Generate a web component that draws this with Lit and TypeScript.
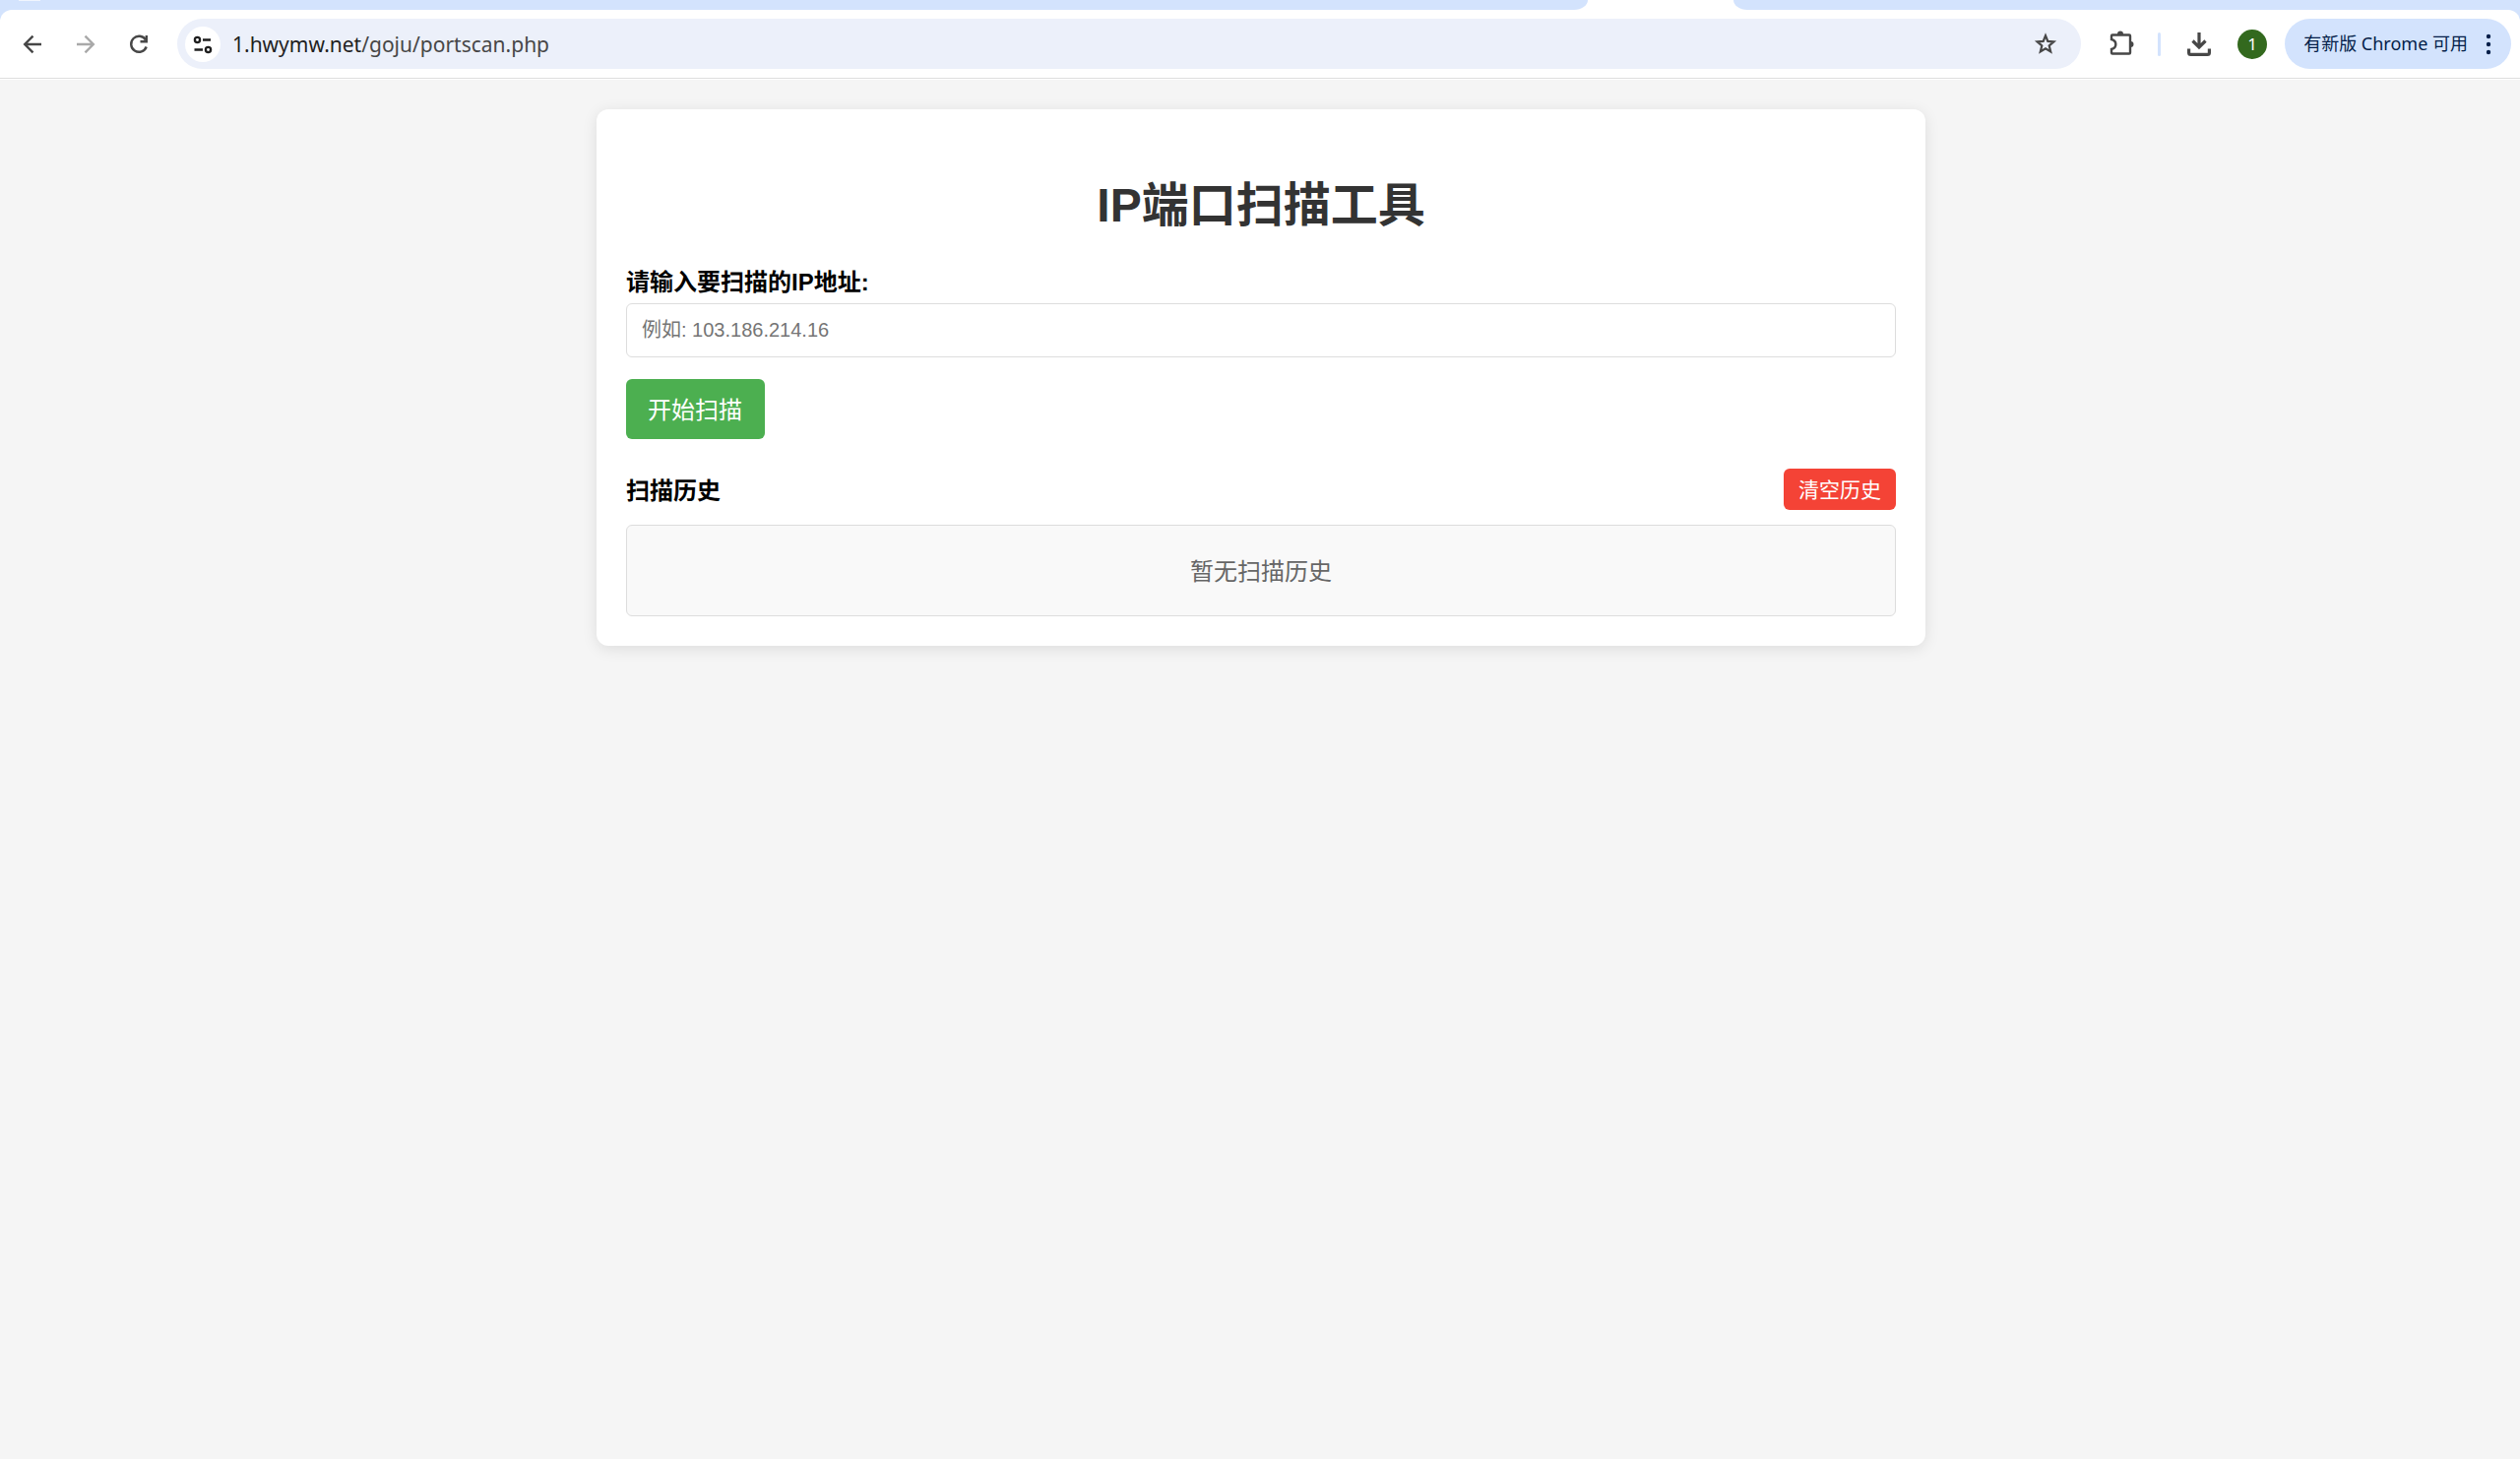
import { LitElement, html, css } from "lit";
import { customElement, state } from "lit/decorators.js";

@customElement("browser-bar")
class BrowserBar extends LitElement {
  static styles = css`
    :host {
      display: block;
      background: #d3e3fd;
      font-family: "Noto Sans", "Noto Sans CJK SC", sans-serif;
    }
    button {
      border: 0;
      padding: 0;
      background: none;
      font: inherit;
      color: #474747;
      display: flex;
      align-items: center;
      justify-content: center;
      flex: none;
    }
    svg {
      display: block;
      fill: none;
      stroke: currentColor;
    }
    .tabs {
      display: flex;
      height: 10px;
      background: #fff;
    }
    .strip {
      background: #d3e3fd;
    }
    .before {
      flex: 1613;
      border-bottom-right-radius: 14px 10px;
    }
    .search-edge {
      width: 22px;
      height: 1px;
      margin-left: 19px;
      background: #f0f5fe;
    }
    .active {
      flex: 148;
    }
    .after {
      flex: 799;
      border-bottom-left-radius: 14px 10px;
    }
    .toolbar {
      display: flex;
      align-items: center;
      gap: 18px;
      padding: 9px 9px 9px 6px;
      background: #fff;
      border-radius: 12px 12px 0 0;
      border-bottom: 1px solid #dfdfdf;
    }
    .nav {
      display: flex;
      margin-right: -6px;
    }
    .nav .disabled {
      color: #a9a9a9;
    }
    .omnibox {
      flex: 1;
      min-width: 0;
      display: flex;
      align-items: center;
      height: 51px;
      padding: 0 15px 0 8px;
      box-sizing: border-box;
      border-radius: 26px;
      background: #ecf0fa;
    }
    .site {
      width: 36px;
      height: 36px;
      border-radius: 50%;
      background: #fff;
      color: #1f1f1f;
    }
    .url {
      flex: 1;
      min-width: 0;
      margin-left: 12px;
      font-size: 21px;
      line-height: 30px;
      color: #474747;
      white-space: nowrap;
      overflow: hidden;
    }
    .host {
      color: #1f1f1f;
    }
    .divider {
      width: 3px;
      height: 24px;
      border-radius: 2px;
      background: #d3e3fd;
    }
    .avatar {
      width: 30px;
      height: 30px;
      border-radius: 50%;
      background: #33691e;
      color: #fff;
      font-size: 17px;
      line-height: 30px;
    }
    .update {
      height: 51px;
      border-radius: 26px;
      padding: 0 20px 0 19px;
      gap: 18px;
      background: #d3e3fd;
      color: #041e49;
      font-size: 18px;
      line-height: 27px;
      white-space: nowrap;
    }
    .dots {
      fill: currentColor;
      stroke: none;
    }
  `;

  render() {
    return html`
      <div class="tabs">
        <div class="strip before"><div class="search-edge"></div></div>
        <div class="active"></div>
        <div class="strip after"></div>
      </div>
      <div class="toolbar">
        <nav class="nav">
          <button aria-label="返回">
            <svg width="54" height="51" viewBox="0 0 54 51" stroke-width="2.4">
              <path d="M36 26H19.5M27.5 17.6L19.2 26L27.5 34.4" />
            </svg>
          </button>
          <button class="disabled" aria-label="前进">
            <svg width="54" height="51" viewBox="0 0 54 51" stroke-width="2.4">
              <path d="M18 26H34.5M26.5 17.6L34.8 26L26.5 34.4" />
            </svg>
          </button>
          <button aria-label="重新加载">
            <svg width="54" height="51" viewBox="0 0 54 51" stroke-width="2.4">
              <path d="M34 21.5A8 8 0 1 0 34.7 28.5" />
              <path d="M34.8 17V23.3H28.5" />
            </svg>
          </button>
        </nav>
        <div class="omnibox">
          <button class="site" aria-label="查看网站信息">
            <svg width="36" height="36" viewBox="0 0 36 36" stroke-width="2.3">
              <circle cx="12.5" cy="13.5" r="2.6" />
              <path d="M18 13.5H26M9.5 23.5H18" />
              <circle cx="23.5" cy="23.5" r="2.6" />
            </svg>
          </button>
          <div class="url"><span class="host">1.hwymw.net</span>/goju/portscan.php</div>
          <button aria-label="为此标签页添加书签">
            <svg width="42" height="51" viewBox="0 0 42 51" stroke-width="2.2">
              <path
                d="M21 17.2L23.3 22.9L29.4 23.4L24.7 27.4L26.2 33.4L21 30.2L15.8 33.4L17.3 27.4L12.6 23.4L18.7 22.9Z"
              />
            </svg>
          </button>
        </div>
        <button aria-label="扩展程序">
          <svg width="42" height="51" viewBox="0 0 42 51" stroke-width="2.4">
            <path
              d="M14 16.5H31Q32 16.5 32 17.5V34.5Q32 35.5 31 35.5H14Q13 35.5 13 34.5V31C18.8 29.5 18.8 22.5 13 21V17.5Q13 16.5 14 16.5Z"
            />
            <path class="dots" d="M19 16V15.5A3 3 0 0 1 25 15.5V16ZM32 23H32.5A3 3 0 0 1 32.5 29H32Z" />
          </svg>
        </button>
        <div class="divider"></div>
        <button aria-label="下载内容">
          <svg width="42" height="51" viewBox="0 0 42 51" stroke-width="3.2">
            <path d="M21 14V29.5M14.5 22.5L21 29L27.5 22.5" />
            <path d="M10.6 30.5V34.5Q10.6 36.4 12.5 36.4H29.5Q31.4 36.4 31.4 34.5V30.5" />
          </svg>
        </button>
        <button class="avatar">1</button>
        <button class="update">
          <span>有新版 Chrome 可用</span>
          <svg class="dots" width="6" height="24" viewBox="0 0 6 24">
            <circle cx="3" cy="4" r="2.2" />
            <circle cx="3" cy="12" r="2.2" />
            <circle cx="3" cy="20" r="2.2" />
          </svg>
        </button>
      </div>
    `;
  }
}

@customElement("port-scanner")
class PortScanner extends LitElement {
  @state() private address = "";
  @state() private history: string[] = [];

  static styles = css`
    :host {
      display: block;
      max-width: 1350px;
      margin: 0 auto;
      padding: 30px;
      box-sizing: border-box;
      border-radius: 12px;
      background: #fff;
      box-shadow: 0 3px 15px rgba(0, 0, 0, 0.1);
      color: #000;
      font-size: 24px;
      line-height: 31px;
    }
    h1 {
      margin: 40px 0 34px;
      font-size: 48px;
      line-height: 56px;
      text-align: center;
      color: #333;
    }
    label {
      display: block;
      margin-bottom: 6px;
      font-weight: bold;
    }
    input {
      display: block;
      width: 100%;
      box-sizing: border-box;
      margin-bottom: 22px;
      padding: 15px;
      border: 1px solid #ddd;
      border-radius: 6px;
      font: inherit;
      font-size: 20px;
      line-height: 23px;
      height: 55px;
    }
    input::placeholder {
      color: #757575;
    }
    button {
      display: block;
      border: 0;
      border-radius: 6px;
      color: #fff;
      font: inherit;
    }
    .start {
      padding: 16px 23px 14px 22px;
      background: #4caf50;
    }
    .clear {
      padding: 7px 15px 5px;
      background: #f44336;
      font-size: 21px;
      line-height: 30px;
    }
    .head {
      display: flex;
      justify-content: space-between;
      align-items: center;
      margin: 30px 0 15px;
    }
    h2 {
      margin: 0;
      padding-top: 3px;
      font-size: 24px;
      line-height: 31px;
    }
    .list {
      padding: 31px 30px 29px;
      border: 1px solid #ddd;
      border-radius: 6px;
      background: #f9f9f9;
      color: #666;
      text-align: center;
    }
  `;

  private onInput(e: Event) {
    this.address = (e.target as HTMLInputElement).value;
  }

  private scan() {
    const ip = this.address.trim();
    if (ip) this.history = [ip, ...this.history];
  }

  private clear() {
    this.history = [];
  }

  render() {
    return html`
      <h1>IP端口扫描工具</h1>
      <label for="ip">请输入要扫描的IP地址:</label>
      <input id="ip" type="text" placeholder="例如: 103.186.214.16" .value=${this.address} @input=${this.onInput} />
      <button class="start" @click=${this.scan}>开始扫描</button>
      <div class="head">
        <h2>扫描历史</h2>
        <button class="clear" @click=${this.clear}>清空历史</button>
      </div>
      <div class="list">
        ${this.history.length ? this.history.map((ip) => html`<div>${ip}</div>`) : "暂无扫描历史"}
      </div>
    `;
  }
}

@customElement("app-root")
class AppRoot extends LitElement {
  static styles = css`
    :host {
      display: flex;
      flex-direction: column;
      min-height: 100vh;
      background: #f5f5f5;
    }
    main {
      flex: 1;
      padding: 30px 30px 30px 32px;
      border-top: 1px solid #fff;
      font-family: "Liberation Sans", "Noto Sans CJK SC", sans-serif;
    }
  `;

  render() {
    return html`
      <browser-bar></browser-bar>
      <main><port-scanner></port-scanner></main>
    `;
  }
}
